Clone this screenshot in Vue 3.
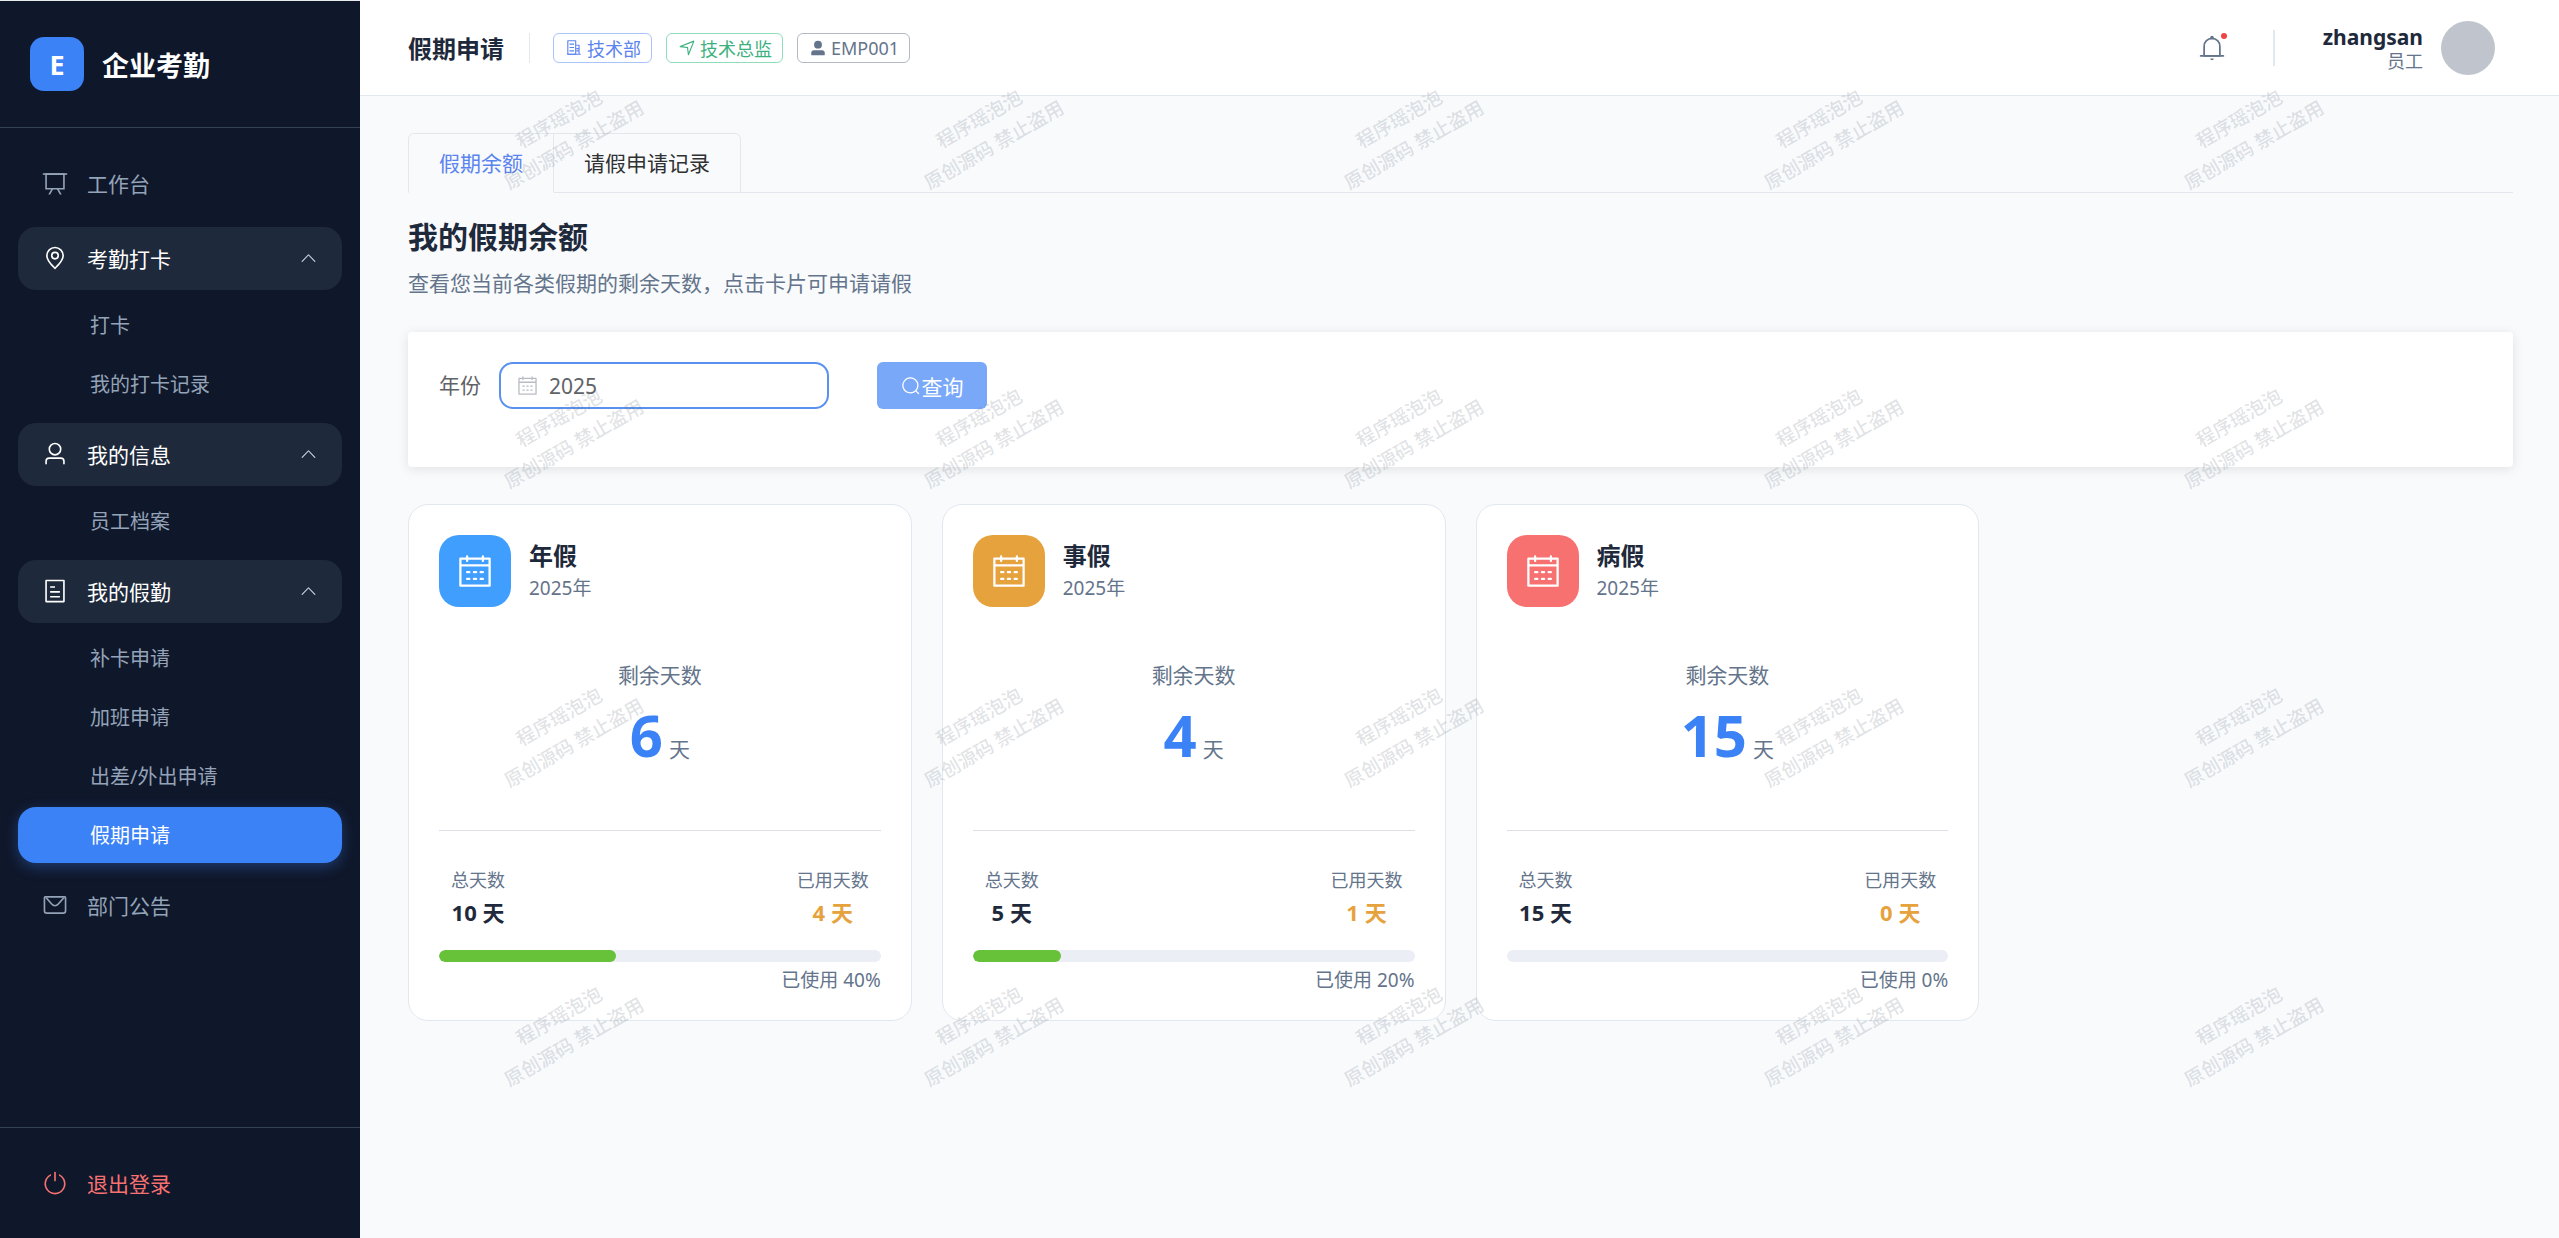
<script setup>
const subsA = ["打卡", "我的打卡记录"];
const subsB = ["员工档案"];
const subsC = ["补卡申请", "加班申请", "出差/外出申请"];

const cards = [
  { name: "年假", color: "#409eff", left: 6, total: 10, used: 4, pct: 40 },
  { name: "事假", color: "#e6a23c", left: 4, total: 5, used: 1, pct: 20 },
  { name: "病假", color: "#f87171", left: 15, total: 15, used: 0, pct: 0 },
];

const marks = Array.from({ length: 20 }, (_, i) => i);

const calendarPath =
  "M128 384v512h768V192H768v32a32 32 0 1 1-64 0v-32H320v32a32 32 0 0 1-64 0v-32H128v128h768v64zm192-256h384V96a32 32 0 1 1 64 0v32h160a32 32 0 0 1 32 32v768a32 32 0 0 1-32 32H96a32 32 0 0 1-32-32V160a32 32 0 0 1 32-32h160V96a32 32 0 0 1 64 0zm-32 384h64a32 32 0 0 1 0 64h-64a32 32 0 0 1 0-64m0 192h64a32 32 0 1 1 0 64h-64a32 32 0 1 1 0-64m192-192h64a32 32 0 0 1 0 64h-64a32 32 0 0 1 0-64m0 192h64a32 32 0 1 1 0 64h-64a32 32 0 1 1 0-64m192-192h64a32 32 0 1 1 0 64h-64a32 32 0 1 1 0-64m0 192h64a32 32 0 1 1 0 64h-64a32 32 0 1 1 0-64";
const arrowUp =
  "M488.832 344.32l-339.84 356.672a32 32 0 0 0 0 44.16l.384.384a29.44 29.44 0 0 0 42.688 0l320-335.872 319.872 335.872a29.44 29.44 0 0 0 42.688 0l.384-.384a32 32 0 0 0 0-44.16L535.168 344.32a32 32 0 0 0-46.336 0z";
</script>

<template>
  <div class="layout">
    <aside class="sidebar">
      <div class="brand">
        <div class="logo">E</div>
        <span class="brand-name">企业考勤</span>
      </div>

      <nav class="nav">
        <div class="item">
          <svg class="ico" viewBox="0 0 1024 1024"><path d="M32 128h960v64H32z" /><path d="M192 192v512h640V192zm-64-64h768v640H128z" /><path d="M322.176 960H248.32l144.64-250.56 55.424 32zm453.888 0h-73.856L576 741.44l55.424-32z" /></svg>
          <span>工作台</span>
        </div>

        <div class="item open">
          <svg class="ico" viewBox="0 0 1024 1024"><path d="M800 416a288 288 0 1 0-576 0c0 118.144 94.528 272.128 288 456.576C705.472 688.128 800 534.144 800 416M512 960C277.312 746.752 160 565.312 160 416a352 352 0 0 1 704 0c0 149.312-117.312 330.752-352 544" /><path d="M512 512a96 96 0 1 0 0-192 96 96 0 0 0 0 192m0 64a160 160 0 1 1 0-320 160 160 0 0 1 0 320" /></svg>
          <span>考勤打卡</span>
          <svg class="arrow" viewBox="0 0 1024 1024"><path :d="arrowUp" /></svg>
        </div>
        <div class="subs">
          <div v-for="s in subsA" :key="s" class="sub">{{ s }}</div>
        </div>

        <div class="item open">
          <svg class="ico" viewBox="0 0 1024 1024"><path d="M512 512a192 192 0 1 0 0-384 192 192 0 0 0 0 384m0 64a256 256 0 1 1 0-512 256 256 0 0 1 0 512m320 320v-96a96 96 0 0 0-96-96H288a96 96 0 0 0-96 96v96a32 32 0 1 1-64 0v-96a160 160 0 0 1 160-160h448a160 160 0 0 1 160 160v96a32 32 0 1 1-64 0" /></svg>
          <span>我的信息</span>
          <svg class="arrow" viewBox="0 0 1024 1024"><path :d="arrowUp" /></svg>
        </div>
        <div class="subs">
          <div v-for="s in subsB" :key="s" class="sub">{{ s }}</div>
        </div>

        <div class="item open">
          <svg class="ico" viewBox="0 0 1024 1024"><path d="M192 128v768h640V128zm-32-64h704a32 32 0 0 1 32 32v832a32 32 0 0 1-32 32H160a32 32 0 0 1-32-32V96a32 32 0 0 1 32-32m160 448h384v64H320zm0-192h192v64H320zm0 384h384v64H320z" /></svg>
          <span>我的假勤</span>
          <svg class="arrow" viewBox="0 0 1024 1024"><path :d="arrowUp" /></svg>
        </div>
        <div class="subs">
          <div v-for="s in subsC" :key="s" class="sub">{{ s }}</div>
          <div class="sub active">假期申请</div>
        </div>

        <div class="item">
          <svg class="ico" viewBox="0 0 1024 1024"><path d="M128 224v512a64 64 0 0 0 64 64h640a64 64 0 0 0 64-64V224zm0-64h768a64 64 0 0 1 64 64v512a128 128 0 0 1-128 128H192A128 128 0 0 1 64 736V224a64 64 0 0 1 64-64" /><path d="M904 224 656.512 506.88a192 192 0 0 1-289.024 0L120 224zm-698.944 0 210.56 240.704a128 128 0 0 0 192.704 0L818.944 224H205.056" /></svg>
          <span>部门公告</span>
        </div>
      </nav>

      <div class="logout">
        <svg class="ico" viewBox="0 0 1024 1024"><path d="M352 159.872V230.4a352 352 0 1 0 320 0v-70.528A416.128 416.128 0 0 1 512 960a416 416 0 0 1-160-800.128z" /><path d="M512 64q32 0 32 32v320q0 32-32 32t-32-32V96q0-32 32-32" /></svg>
        <span>退出登录</span>
      </div>
    </aside>

    <div class="right">
      <header class="topbar">
        <h1 class="page-title">假期申请</h1>
        <div class="vline"></div>
        <div class="tags">
          <span class="tag blue">
            <svg viewBox="0 0 1024 1024"><path d="M192 128v704h384V128zm-32-64h448a32 32 0 0 1 32 32v768a32 32 0 0 1-32 32H160a32 32 0 0 1-32-32V96a32 32 0 0 1 32-32" /><path d="M256 256h256v64H256zm0 192h256v64H256zm0 192h256v64H256zm384-128h128v64H640zm0 128h128v64H640zM768 832V384H640v-64h160a32 32 0 0 1 32 32v480h64v64H128v-64z" /></svg>
            技术部
          </span>
          <span class="tag green">
            <svg viewBox="0 0 1024 1024"><path d="m249.6 417.088 319.744 43.072 39.168 310.272L845.12 178.88zm-129.024 47.168a32 32 0 0 1-7.68-61.44l777.792-311.04a32 32 0 0 1 41.6 41.6l-310.4 777.28a32 32 0 0 1-61.44-7.808L512 516.992z" /></svg>
            技术总监
          </span>
          <span class="tag gray">
            <svg viewBox="0 0 1024 1024"><path d="M288 320a224 224 0 1 0 448 0 224 224 0 1 0-448 0m544 608H160a32 32 0 0 1-32-32v-96a160 160 0 0 1 160-160h448a160 160 0 0 1 160 160v96a32 32 0 0 1-32 32z" /></svg>
            EMP001
          </span>
        </div>

        <div class="top-right">
          <div class="bell">
            <svg viewBox="0 0 1024 1024"><path d="M512 64a64 64 0 0 1 64 64v64H448v-64a64 64 0 0 1 64-64" /><path d="M256 768h512V448a256 256 0 1 0-512 0zm256-640a320 320 0 0 1 320 320v384H192V448a320 320 0 0 1 320-320" /><path d="M96 768h832q32 0 32 32t-32 32H96q-32 0-32-32t32-32m352 128h128a64 64 0 0 1-128 0" /></svg>
            <i class="dot"></i>
          </div>
          <div class="vline tall"></div>
          <div class="user">
            <div class="user-name">zhangsan</div>
            <div class="user-role">员工</div>
          </div>
          <div class="avatar"></div>
        </div>
      </header>

      <main class="content">
        <div class="tabs">
          <div class="tab current">假期余额</div>
          <div class="tab">请假申请记录</div>
        </div>

        <h2 class="heading">我的假期余额</h2>
        <p class="desc">查看您当前各类假期的剩余天数，点击卡片可申请请假</p>

        <section class="filter">
          <label class="filter-label">年份</label>
          <div class="year-input">
            <svg viewBox="0 0 1024 1024"><path :d="calendarPath" /></svg>
            <span>2025</span>
          </div>
          <button class="query">
            <svg viewBox="0 0 1024 1024"><path d="m795.904 750.72 124.992 124.928a32 32 0 0 1-45.248 45.248L750.656 795.904a416 416 0 1 1 45.248-45.248zM480 832a352 352 0 1 0 0-704 352 352 0 0 0 0 704" /></svg>查询
          </button>
        </section>

        <section class="cards">
          <article v-for="c in cards" :key="c.name" class="card">
            <div class="card-head">
              <div class="card-icon" :style="{ background: c.color }">
                <svg viewBox="0 0 1024 1024"><path :d="calendarPath" /></svg>
              </div>
              <div>
                <div class="card-name">{{ c.name }}</div>
                <div class="card-year">2025年</div>
              </div>
            </div>

            <div class="remain">
              <div class="remain-label">剩余天数</div>
              <div class="remain-value"><b>{{ c.left }}</b><span>天</span></div>
            </div>

            <div class="stats">
              <div class="stat">
                <div class="stat-label">总天数</div>
                <div class="stat-value">{{ c.total }} 天</div>
              </div>
              <div class="stat">
                <div class="stat-label">已用天数</div>
                <div class="stat-value used">{{ c.used }} 天</div>
              </div>
            </div>

            <div class="bar">
              <div class="bar-fill" :style="{ width: c.pct + '%' }"></div>
            </div>
            <div class="bar-text">已使用 {{ c.pct }}%</div>
          </article>
        </section>
      </main>

      <div class="marks">
        <div v-for="m in marks" :key="m" class="mark">程序瑶泡泡<br />原创源码 禁止盗用</div>
      </div>
    </div>
  </div>
</template>

<style>
body {
  margin: 0;
  overflow: hidden;
}
</style>

<style scoped>
.layout {
  display: flex;
  height: 100vh;
  font-family: "Noto Sans", "Noto Sans CJK SC", sans-serif;
  color: #1e293b;
}
svg {
  fill: currentColor;
  flex: none;
}

.sidebar {
  width: 360px;
  flex: none;
  display: flex;
  flex-direction: column;
  box-sizing: border-box;
  background: #0f172a;
  border-top: 1px solid #e8eaee;
}
.brand {
  display: flex;
  align-items: center;
  gap: 18px;
  height: 126px;
  padding-left: 30px;
  border-bottom: 1px solid #334155;
}
.logo {
  width: 54px;
  height: 54px;
  border-radius: 14px;
  background: #3b82f6;
  color: #fff;
  font-size: 27px;
  font-weight: 700;
  display: flex;
  align-items: center;
  justify-content: center;
}
.brand-name {
  color: #fff;
  font-size: 27px;
  font-weight: 700;
}
.nav {
  flex: 1;
  padding: 24px 18px 0;
}
.item {
  height: 63px;
  display: flex;
  align-items: center;
  gap: 19px;
  padding: 0 24px 2px;
  margin-bottom: 12px;
  box-sizing: border-box;
  border-radius: 18px;
  color: #94a3b8;
  font-size: 21px;
}
.item.open {
  background: #1e293b;
  color: #fff;
  margin-bottom: 7px;
}
.ico {
  width: 26px;
  height: 26px;
}
.arrow {
  width: 19px;
  height: 19px;
  margin-left: auto;
  color: #cbd5e1;
}
.subs {
  display: flex;
  flex-direction: column;
  margin-bottom: 8px;
}
.sub {
  height: 56px;
  line-height: 57px;
  padding-left: 72px;
  margin-bottom: 3px;
  border-radius: 18px;
  color: #94a3b8;
  font-size: 20px;
}
.sub.active {
  background: #3b82f6;
  color: #fff;
  box-shadow: 0 4px 14px rgba(59, 130, 246, 0.35);
}
.logout {
  height: 110px;
  display: flex;
  align-items: center;
  gap: 19px;
  padding-left: 42px;
  border-top: 1px solid #334155;
  color: #f87171;
  font-size: 21px;
}

.right {
  position: relative;
  flex: 1;
  min-width: 0;
  display: flex;
  flex-direction: column;
}
.topbar {
  height: 96px;
  flex: none;
  box-sizing: border-box;
  display: flex;
  align-items: center;
  padding: 0 64px 0 48px;
  background: #fff;
  border-bottom: 1px solid #e2e8f0;
}
.page-title {
  margin: 0;
  font-size: 24px;
  font-weight: 700;
}
.vline {
  width: 1px;
  height: 30px;
  margin: 0 23px 0 25px;
  background: #e2e8f0;
}
.vline.tall {
  width: 2px;
  height: 36px;
  margin: 0 48px 0 47px;
}
.tags {
  display: flex;
  gap: 14px;
}
.tag {
  height: 30px;
  box-sizing: border-box;
  display: inline-flex;
  align-items: center;
  gap: 4px;
  padding: 0 10px 0 11px;
  border: 1px solid;
  border-radius: 6px;
  font-size: 18px;
}
.tag svg {
  width: 18px;
  height: 18px;
}
.tag.blue {
  color: #5b84ee;
  border-color: #a9c4f8;
}
.tag.green {
  color: #3cb17f;
  border-color: #8fdcb9;
}
.tag.gray {
  color: #64748b;
  border-color: #b3bac6;
}
.top-right {
  margin-left: auto;
  display: flex;
  align-items: center;
}
.bell {
  position: relative;
  width: 28px;
  height: 28px;
  color: #64748b;
}
.bell svg {
  width: 28px;
  height: 28px;
  display: block;
}
.dot {
  position: absolute;
  top: -1px;
  right: -1px;
  width: 6px;
  height: 6px;
  border-radius: 50%;
  background: #ef4444;
}
.user {
  text-align: right;
  margin-right: 18px;
}
.user-name {
  font-size: 21px;
  font-weight: 700;
  line-height: 26px;
}
.user-role {
  font-size: 18px;
  line-height: 22px;
  color: #64748b;
}
.avatar {
  width: 54px;
  height: 54px;
  border-radius: 50%;
  background: #c0c4cc;
}

.content {
  flex: 1;
  overflow: hidden;
  background: #f8fafc;
  padding: 37px 46px 0 48px;
}
.tabs {
  display: flex;
  height: 60px;
  box-sizing: border-box;
  border-bottom: 1px solid #e4e7ed;
}
.tab {
  height: 60px;
  box-sizing: border-box;
  padding: 0 30px;
  line-height: 58px;
  font-size: 21px;
  color: #303133;
  border: 1px solid #e4e7ed;
  border-left: 0;
}
.tab:last-child {
  border-top-right-radius: 6px;
}
.tab.current {
  color: #5b84ee;
  border-left: 1px solid #e4e7ed;
  border-bottom-color: #f8fafc;
  border-top-left-radius: 6px;
}
.heading {
  margin: 23px 0 0;
  font-size: 30px;
  line-height: 42px;
  font-weight: 700;
}
.desc {
  margin: 10px 0 0;
  font-size: 21px;
  line-height: 30px;
  color: #64748b;
}
.filter {
  height: 135px;
  margin-top: 34px;
  box-sizing: border-box;
  display: flex;
  align-items: flex-start;
  padding: 30px 31px;
  background: #fff;
  border-radius: 4px;
  box-shadow: 0 2px 12px rgba(0, 0, 0, 0.1);
}
.filter-label {
  font-size: 21px;
  line-height: 47px;
  color: #606266;
  margin-right: 18px;
}
.year-input {
  width: 330px;
  height: 47px;
  box-sizing: border-box;
  display: flex;
  align-items: center;
  gap: 11px;
  padding-left: 16px;
  border: 2px solid #5b91ee;
  border-radius: 14px;
  font-size: 21px;
  color: #606266;
}
.year-input svg {
  width: 21px;
  height: 21px;
  color: #b8bcc4;
}
.query {
  width: 110px;
  height: 47px;
  margin-left: 48px;
  display: flex;
  align-items: center;
  justify-content: center;
  gap: 1px;
  border: 0;
  border-radius: 6px;
  background: #79a8f9;
  color: #fff;
  font: inherit;
  font-size: 21px;
}
.query svg {
  width: 20px;
  height: 20px;
}
.cards {
  display: grid;
  grid-template-columns: repeat(4, 1fr);
  gap: 30px;
  margin-top: 37px;
}
.card {
  height: 517px;
  box-sizing: border-box;
  padding: 30px;
  background: #fff;
  border: 1px solid #e2e8f0;
  border-radius: 20px;
}
.card-head {
  display: flex;
  align-items: center;
  gap: 18px;
}
.card-icon {
  width: 72px;
  height: 72px;
  border-radius: 20px;
  display: flex;
  align-items: center;
  justify-content: center;
  color: #fff;
}
.card-icon svg {
  width: 36px;
  height: 36px;
}
.card-name {
  font-size: 24px;
  line-height: 34px;
  font-weight: 700;
}
.card-year {
  font-size: 19px;
  line-height: 30px;
  color: #64748b;
}
.remain {
  height: 224px;
  box-sizing: border-box;
  padding-top: 49px;
  text-align: center;
  border-bottom: 1px solid #dcdfe6;
}
.remain-label {
  font-size: 21px;
  line-height: 38px;
  color: #64748b;
}
.remain-value {
  line-height: 80px;
  margin-top: 1px;
}
.remain-value b {
  font-size: 58px;
  color: #3b82f6;
}
.remain-value span {
  font-size: 21px;
  color: #64748b;
  margin-left: 6px;
}
.stats {
  display: flex;
  justify-content: space-between;
  padding: 35px 12px 0;
  text-align: center;
}
.stat-label {
  font-size: 18px;
  line-height: 28px;
  color: #64748b;
}
.stat-value {
  font-size: 22px;
  line-height: 36px;
  font-weight: 700;
}
.stat-value.used {
  color: #e6a23c;
}
.bar {
  height: 12px;
  margin-top: 20px;
  border-radius: 6px;
  background: #ebeef5;
  overflow: hidden;
}
.bar-fill {
  height: 100%;
  border-radius: 6px;
  background: #67c23a;
}
.bar-text {
  margin-top: 4px;
  text-align: right;
  font-size: 19px;
  line-height: 28px;
  color: #64748b;
}

.marks {
  position: absolute;
  top: -18px;
  left: -4px;
  display: grid;
  grid-template-columns: repeat(5, 420px);
  grid-auto-rows: 299px;
  pointer-events: none;
}
.mark {
  align-self: center;
  justify-self: center;
  transform: rotate(-30deg);
  text-align: center;
  white-space: nowrap;
  font-size: 19px;
  font-weight: 500;
  line-height: 30px;
  color: rgba(100, 110, 125, 0.2);
}
</style>
